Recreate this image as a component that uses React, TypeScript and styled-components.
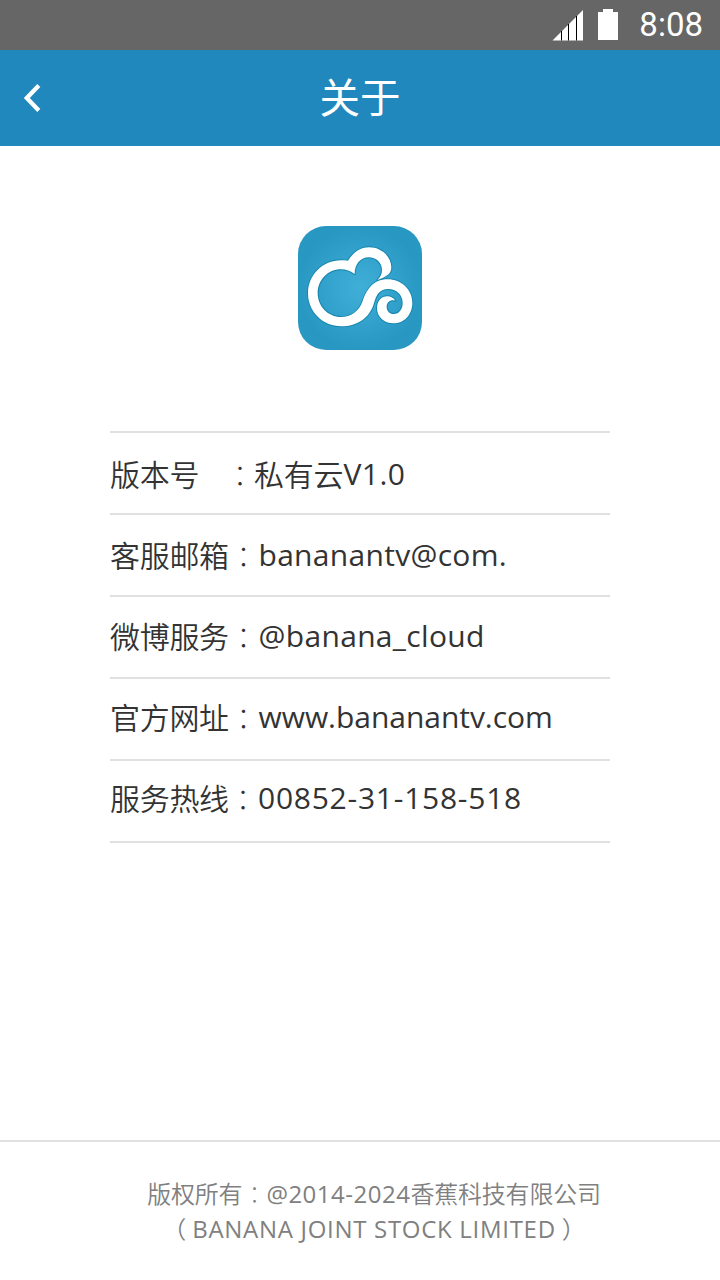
import React from "react";
import styled, { createGlobalStyle } from "styled-components";

const GlobalStyle = createGlobalStyle`
  * { box-sizing: border-box; }
  body { margin: 0; background: #fff; }
`;

const Screen = styled.main`
  display: flex;
  flex-direction: column;
  width: 720px;
  height: 1280px;
  background: #fff;
  color: #333;
  font-family: "Open Sans", "Noto Sans CJK SC", sans-serif;
  overflow: hidden;
`;

const StatusBar = styled.div`
  display: flex;
  justify-content: flex-end;
  align-items: center;
  height: 50px;
  padding-right: 17px;
  background: #666;
`;

const SignalIcon = styled.svg`
  width: 32px;
  height: 32px;
  margin-right: 13px;
`;

const BatteryIcon = styled.svg`
  width: 22px;
  height: 32px;
  margin-right: 20px;
`;

const Clock = styled.span`
  color: #fff;
  font: 33px/50px Roboto, sans-serif;
`;

const TitleBar = styled.header`
  display: grid;
  grid-template-columns: 80px 1fr 80px;
  align-items: center;
  height: 96px;
  background: #2088bc;
`;

const BackButton = styled.button`
  display: flex;
  align-items: center;
  height: 96px;
  padding: 0 0 0 22px;
  border: 0;
  background: none;
`;

const Title = styled.h1`
  height: 96px;
  margin: 0;
  color: #fff;
  font: 400 40.5px/92px "Noto Sans CJK SC", sans-serif;
  text-align: center;
`;

const Content = styled.section`
  display: flex;
  flex: 1;
  flex-direction: column;
  align-items: center;
  padding-top: 80px;
`;

const Logo = styled.svg`
  width: 124px;
  height: 124px;
`;

const InfoList = styled.dl`
  width: 500px;
  margin: 81px 0 0;
  border-top: 2px solid #e0e0e0;
`;

const InfoRow = styled.div<{ $line: number }>`
  display: flex;
  height: 82px;
  border-bottom: 2px solid #e0e0e0;
  font-size: 30px;
  line-height: ${(p) => p.$line}px;
  white-space: nowrap;
`;

const Label = styled.dt<{ $width: number }>`
  width: ${(p) => p.$width}px;
  font-family: "Noto Sans CJK SC", sans-serif;
  font-weight: 350;
  letter-spacing: -0.3px;
`;

const Colon = styled.span<{ $width?: number }>`
  width: ${(p) => p.$width ?? 30}px;
  padding-top: 1px;
  font-family: "Noto Sans CJK TC", sans-serif;
  font-weight: 100;
`;

const Value = styled.dd<{ $spacing: number }>`
  display: flex;
  margin: 0;
  letter-spacing: ${(p) => p.$spacing}px;
`;

const Latin = styled.span`
  padding-top: 1px;
`;

const Han = styled.span`
  font-family: "Noto Sans CJK SC", sans-serif;
  font-weight: 350;
  letter-spacing: -0.2px;
`;

const Footer = styled.footer`
  height: 140px;
  padding: 33px 0 0 28px;
  border-top: 2px solid #e0e0e0;
  color: #808080;
  font-size: 24px;
`;

const FooterLine = styled.p<{ $spacing: number }>`
  display: flex;
  justify-content: center;
  height: 35px;
  margin: 0;
  line-height: 35px;
  letter-spacing: ${(p) => p.$spacing}px;
  white-space: nowrap;
`;

const FooterColon = styled.span`
  padding-top: 1px;
  font-family: "Noto Sans CJK TC", sans-serif;
  font-weight: 100;
  letter-spacing: 0;
`;

const Paren = styled.span`
  margin: 0 6px;
  font-family: "Noto Sans CJK SC", sans-serif;
  font-weight: 350;
  letter-spacing: 0;
`;

const rows = [
  { label: "版本号", labelWidth: 115, colonWidth: 29, han: "私有云", value: "V1.0", spacing: 0.5, line: 80 },
  { label: "客服邮箱", labelWidth: 118.5, value: "bananantv@com.", spacing: 0.3, line: 78 },
  { label: "微博服务", labelWidth: 118.5, value: "@banana_cloud", spacing: 0.33, line: 76 },
  { label: "官方网址", labelWidth: 118.5, value: "www.bananantv.com", spacing: -0.04, line: 74 },
  { label: "服务热线", labelWidth: 118, value: "00852-31-158-518", spacing: 0.75, line: 72 },
];

const cloud =
  "M174 128C190 103 211 88 237 88C275 88 304 116 304 149C304 166 291 175 262 186C271 177 276 168 276 156C276 134 258 118 236 118C212 118 194 138 194 168C182 159 168 154 153 154C114 154 83 186 83 225C83 265 114 297 153 297C183 297 206 280 217 252C229 216 249 184 293 184C334 184 367 215 367 254C367 290 343 316 310 316C282 316 261 297 261 270C261 249 274 235 292 235C303 235 311 240 316 248C301 244 290 253 290 266C290 279 299 288 311 288C327 288 338 274 338 255C338 231 320 213 294 213C270 213 259 229 252 255C240 299 203 325 154 325C98 325 54 281 54 226C54 171 98 127 153 127C161 127 168 127 174 128Z";

export default function App() {
  return (
    <>
      <GlobalStyle />
      <Screen>
        <StatusBar>
          <SignalIcon viewBox="0 0 32 32">
            <path d="M0.5 31.5L31 1V31.5Z" fill="#fff" />
            <path d="M9.5 22V31.5M16.5 15V31.5M24.5 7V31.5" stroke="#000" strokeWidth="1" />
          </SignalIcon>
          <BatteryIcon viewBox="0 0 22 32">
            <path d="M1 3H6V0H16V3H21V31H1Z" fill="#fff" />
          </BatteryIcon>
          <Clock>8:08</Clock>
        </StatusBar>
        <TitleBar>
          <BackButton aria-label="返回">
            <svg width="20" height="32" viewBox="0 0 20 32">
              <path d="M16.8 3.5L4.8 16L16.8 28.5" fill="none" stroke="#fff" strokeWidth="4.3" />
            </svg>
          </BackButton>
          <Title>关于</Title>
        </TitleBar>
        <Content>
          <Logo viewBox="24 24 372 372">
            <defs>
              <radialGradient id="tile">
                <stop offset="0" stopColor="#40afd8" />
                <stop offset="1" stopColor="#2898c3" />
              </radialGradient>
            </defs>
            <rect x="24" y="24" width="372" height="372" rx="84" fill="url(#tile)" />
            <path d={cloud} fill="#fff" stroke="#1686ae" strokeWidth="6" strokeLinejoin="round" />
            <path d={cloud} fill="#fff" />
          </Logo>
          <InfoList>
            {rows.map((row) => (
              <InfoRow key={row.label} $line={row.line}>
                <Label $width={row.labelWidth}>{row.label}</Label>
                <Colon $width={row.colonWidth}>：</Colon>
                <Value $spacing={row.spacing}>
                  {row.han && <Han>{row.han}</Han>}
                  <Latin>{row.value}</Latin>
                </Value>
              </InfoRow>
            ))}
          </InfoList>
        </Content>
        <Footer>
          <FooterLine $spacing={0.5}>
            <Han>版权所有</Han>
            <FooterColon>：</FooterColon>
            <Latin>@2014-2024</Latin>
            <Han>香蕉科技有限公司</Han>
          </FooterLine>
          <FooterLine $spacing={0.7}>
            <Paren>（</Paren>
            <Latin>BANANA JOINT STOCK LIMITED</Latin>
            <Paren>）</Paren>
          </FooterLine>
        </Footer>
      </Screen>
    </>
  );
}
